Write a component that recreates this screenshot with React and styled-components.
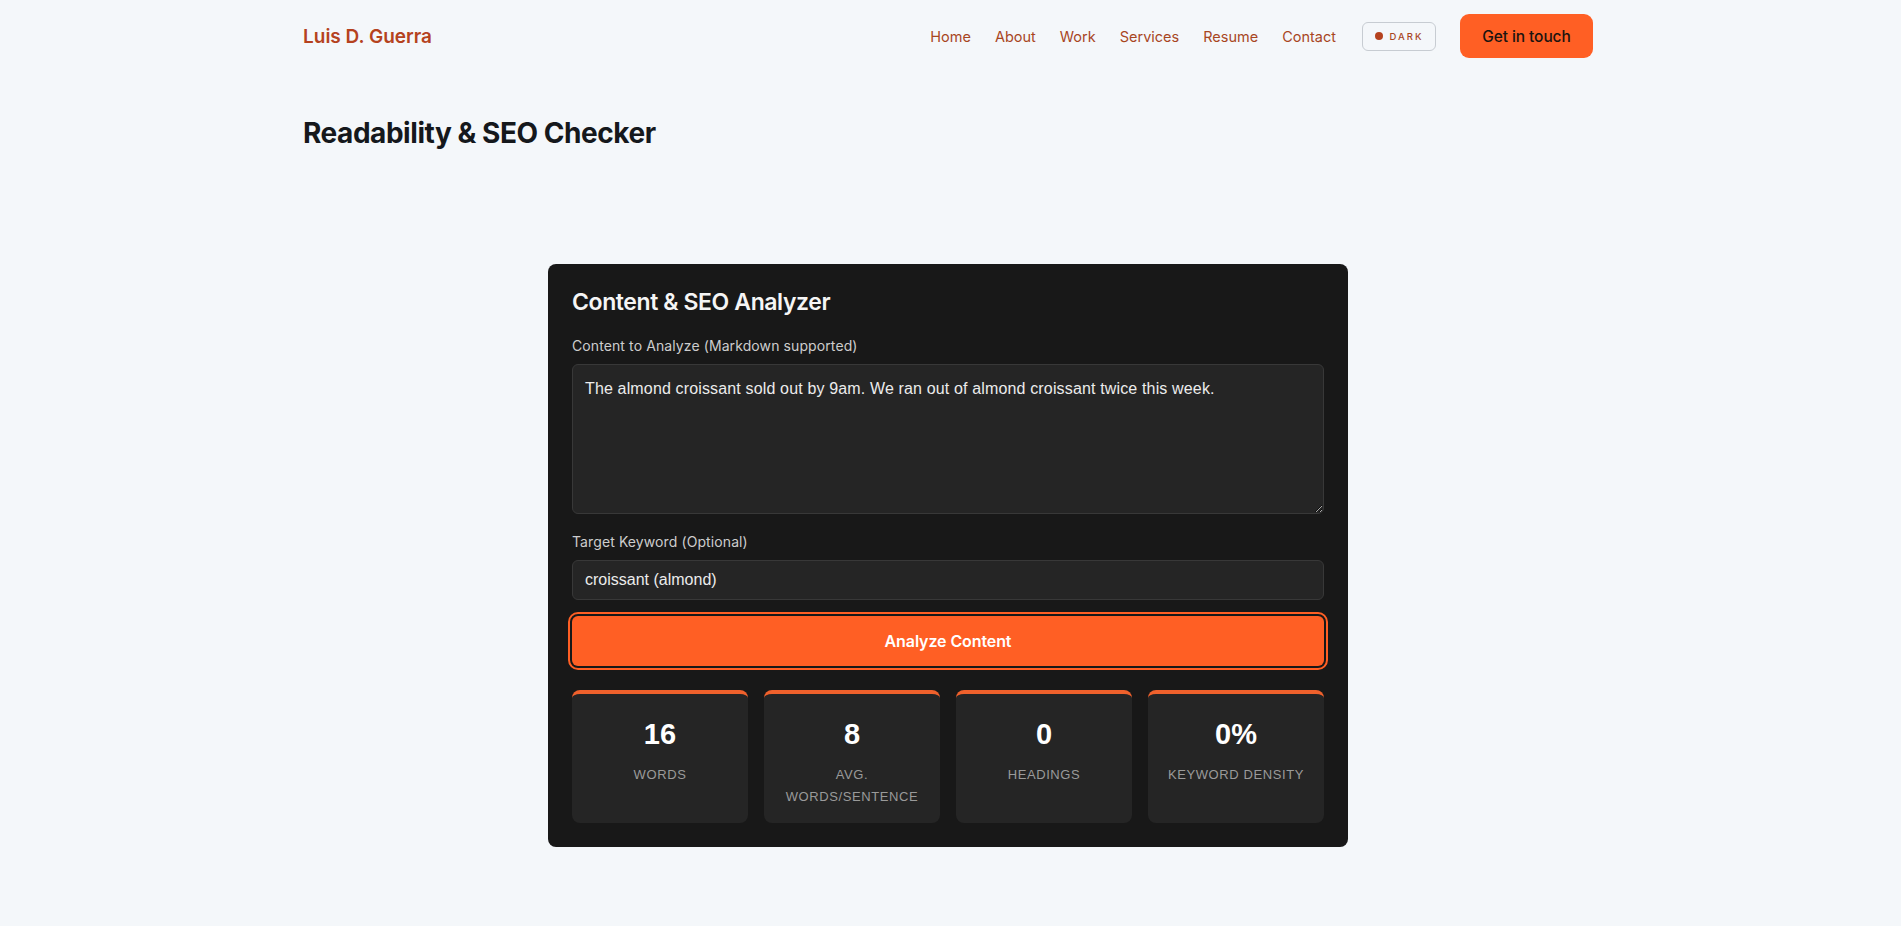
import React from "react";
import styled, { createGlobalStyle } from "styled-components";

const Global = createGlobalStyle`
  html, body { margin: 0; padding: 0; background: #f4f7fa; }
  body { font-family: "Inter", "Noto Sans", sans-serif; -webkit-font-smoothing: antialiased; }
  * { box-sizing: border-box; }
`;

const Page = styled.div`
  min-height: 926px;
  padding-right: 5px;
  background: #f4f7fa;
`;

const Container = styled.div`
  width: 1290px;
  margin: 0 auto;
`;

const Header = styled.header`
  height: 72px;
  display: flex;
  align-items: center;
  justify-content: space-between;
`;

const Logo = styled.a`
  font-family: "Inter", sans-serif;
  font-weight: 600;
  font-size: 19px;
  letter-spacing: 0px;
  color: #b5421e;
  text-decoration: none;
`;

const Nav = styled.nav`
  display: flex;
  align-items: center;
`;

const NavLinks = styled.div`
  display: flex;
  align-items: center;
  gap: 24px;
`;

const NavLink = styled.a`
  font-family: "Inter", sans-serif;
  font-size: 14.5px;
  color: #a8461f;
  text-decoration: none;
`;

const ThemeToggle = styled.button`
  margin-left: 26px;
  height: 29px;
  width: 74px;
  display: flex;
  align-items: center;
  justify-content: center;
  gap: 7px;
  background: transparent;
  border: 1px solid #c7ccd2;
  border-radius: 6px;
  font-family: "Inter", sans-serif;
  font-size: 9.5px;
  font-weight: 500;
  letter-spacing: 2px;
  color: #a8461f;
  padding: 0;
`;

const Dot = styled.span`
  width: 8px;
  height: 8px;
  border-radius: 50%;
  background: #b5421e;
`;

const CTA = styled.a`
  margin-left: 24px;
  height: 44px;
  width: 133px;
  display: flex;
  align-items: center;
  justify-content: center;
  background: #ff5f24;
  border-radius: 9px;
  font-family: "Inter", sans-serif;
  font-size: 15.5px;
  font-weight: 500;
  letter-spacing: -0.1px;
  color: #1b1410;
  text-decoration: none;
`;

const Title = styled.h1`
  margin: 44px 0 0;
  font-family: "Inter", sans-serif;
  font-size: 28px;
  line-height: 35px;
  font-weight: 700;
  letter-spacing: -0.45px;
  color: #15181c;
`;

const Section = styled.section`
  display: flex;
  justify-content: center;
  padding: 113px 0 40px;
`;

const Card = styled.div`
  width: 800px;
  background: #181818;
  border-radius: 8px;
  padding: 24px;
  display: flex;
  flex-direction: column;
`;

const CardTitle = styled.h2`
  margin: 0 0 19px;
  font-family: "Inter", sans-serif;
  font-size: 23px;
  line-height: 29px;
  font-weight: 600;
  letter-spacing: -0.4px;
  color: #f5f5f5;
`;

const Label = styled.label`
  display: block;
  font-family: "Inter", sans-serif;
  font-size: 14px;
  line-height: 20px;
  letter-spacing: 0.1px;
  color: #cdcdcd;
  margin: ${(p) => (p.$spaced ? "18px" : "0")} 0 8px;
`;

const fieldStyles = `
  width: 100%;
  background: #252525;
  border: 1px solid #383838;
  border-radius: 6px;
  color: #ececec;
  font-family: "Liberation Sans", Arial, sans-serif;
  font-size: 16px;
  outline: none;
`;

const TextArea = styled.textarea`
  ${fieldStyles}
  display: block;
  height: 150px;
  padding: 12px;
  line-height: 24px;
  letter-spacing: 0.15px;
  resize: vertical;
`;

const Input = styled.input`
  ${fieldStyles}
  display: block;
  height: 40px;
  padding: 0 12px;
`;

const AnalyzeButton = styled.button`
  margin-top: 16px;
  height: 50px;
  width: 100%;
  border: none;
  border-radius: 6px;
  background: #ff5f24;
  outline: 2px solid #ff5f24;
  outline-offset: 2px;
  font-family: "Inter", sans-serif;
  font-size: 16px;
  font-weight: 600;
  letter-spacing: -0.1px;
  color: #ffffff;
`;

const Stats = styled.div`
  margin-top: 24px;
  display: grid;
  grid-template-columns: repeat(4, 1fr);
  gap: 16px;
`;

const StatBox = styled.div`
  background: #252525;
  border-top: 4px solid #f0612c;
  border-radius: 8px;
  padding: 23px 12px 15px;
  text-align: center;
`;

const StatValue = styled.div`
  font-family: "Liberation Sans", Arial, sans-serif;
  font-weight: 700;
  font-size: 29px;
  line-height: 34px;
  color: #ffffff;
  margin-bottom: 13px;
`;

const StatLabel = styled.div`
  font-family: "Liberation Sans", Arial, sans-serif;
  font-size: 13px;
  line-height: 22px;
  letter-spacing: 0.6px;
  text-transform: uppercase;
  color: #9a9a9a;
`;

const stats = [
  { value: "16", label: "Words" },
  { value: "8", label: "Avg. Words/Sentence" },
  { value: "0", label: "Headings" },
  { value: "0%", label: "Keyword Density" },
];

export default function App() {
  return (
    <Page>
      <Global />
      <Container>
        <Header>
          <Logo href="#">Luis D. Guerra</Logo>
          <Nav>
            <NavLinks>
              {["Home", "About", "Work", "Services", "Resume", "Contact"].map((n) => (
                <NavLink key={n} href="#">{n}</NavLink>
              ))}
            </NavLinks>
            <ThemeToggle>
              <Dot />
              DARK
            </ThemeToggle>
            <CTA href="#">Get in touch</CTA>
          </Nav>
        </Header>
        <Title>Readability &amp; SEO Checker</Title>
        <Section>
          <Card>
            <CardTitle>Content &amp; SEO Analyzer</CardTitle>
            <Label>Content to Analyze (Markdown supported)</Label>
            <TextArea defaultValue="The almond croissant sold out by 9am. We ran out of almond croissant twice this week." />
            <Label $spaced>Target Keyword (Optional)</Label>
            <Input defaultValue="croissant (almond)" />
            <AnalyzeButton>Analyze Content</AnalyzeButton>
            <Stats>
              {stats.map((s) => (
                <StatBox key={s.label}>
                  <StatValue>{s.value}</StatValue>
                  <StatLabel>{s.label}</StatLabel>
                </StatBox>
              ))}
            </Stats>
          </Card>
        </Section>
      </Container>
    </Page>
  );
}
